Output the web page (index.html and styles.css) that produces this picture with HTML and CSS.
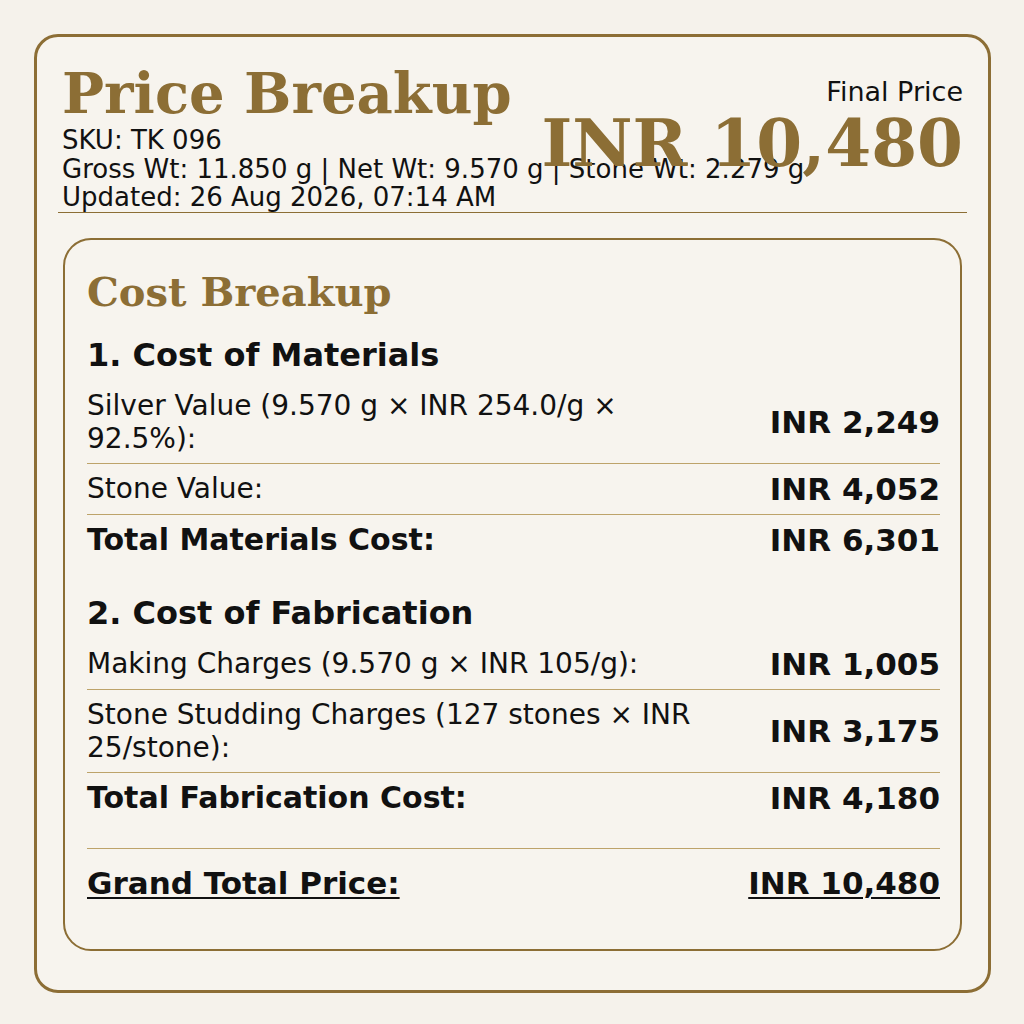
FILE: index.html
```html
<!DOCTYPE html>
<html lang="en">
<head>
<meta charset="utf-8">
<title>Price Breakup</title>
<link rel="stylesheet" href="styles.css">
</head>
<body>
<div class="card">
  <header class="head">
    <div class="head-left">
      <h1 class="title">Price Breakup</h1>
      <div class="info">SKU: TK 096</div>
      <div class="info">Gross Wt: 11.850 g | Net Wt: 9.570 g | Stone Wt: 2.279 g</div>
      <div class="info">Updated: 26 Aug 2026, 07:14 AM</div>
    </div>
    <div class="head-right">
      <div class="final-label">Final Price</div>
      <div class="final-value">INR 10,480</div>
    </div>
  </header>

  <section class="box">
    <h2 class="box-title">Cost Breakup</h2>

    <div class="group">
      <h3 class="group-title">1. Cost of Materials</h3>
      <div class="row">
        <span class="label">Silver Value (9.570 g × INR 254.0/g × 92.5%):</span>
        <span class="value">INR 2,249</span>
      </div>
      <div class="row">
        <span class="label">Stone Value:</span>
        <span class="value">INR 4,052</span>
      </div>
      <div class="row total">
        <span class="label">Total Materials Cost:</span>
        <span class="value">INR 6,301</span>
      </div>
    </div>

    <div class="group">
      <h3 class="group-title">2. Cost of Fabrication</h3>
      <div class="row">
        <span class="label">Making Charges (9.570 g × INR 105/g):</span>
        <span class="value">INR 1,005</span>
      </div>
      <div class="row">
        <span class="label">Stone Studding Charges (127 stones × INR 25/stone):</span>
        <span class="value">INR 3,175</span>
      </div>
      <div class="row total">
        <span class="label">Total Fabrication Cost:</span>
        <span class="value">INR 4,180</span>
      </div>
    </div>

    <div class="grand">
      <span class="grand-label">Grand Total Price:</span>
      <span class="grand-value">INR 10,480</span>
    </div>
  </section>
</div>
</body>
</html>
```

FILE: styles.css
```css
html, body {
  margin: 0;
  padding: 0;
  background: #f5f2eb;
}

body {
  font-family: "DejaVu Sans", "Liberation Sans", sans-serif;
  color: #111111;
  padding: 34px 33px 33px 34px;
}

.card {
  background: #f7f4ee;
  border: 3px solid #8c6e35;
  border-radius: 24px;
  padding: 23px 25px 39px 25px;
}

.head {
  display: flex;
  justify-content: space-between;
  border-bottom: 1px solid #8c6e35;
  margin: 0 -4px;
  padding: 0 4px 0 4px;
}

.head-left {
  flex: 1 1 auto;
  min-width: 0;
  white-space: nowrap;
}

.title {
  margin: 0;
  font-family: "DejaVu Serif", "Liberation Serif", serif;
  font-weight: bold;
  font-size: 56px;
  line-height: normal;
  color: #8c6e35;
}

.info {
  font-size: 26px;
  line-height: 1.1;
}

.head-right {
  flex: none;
  display: flex;
  flex-direction: column;
  align-items: flex-end;
  margin-top: 17px;
}

.final-label {
  font-size: 27px;
  line-height: 1.1;
}

.final-value {
  margin-top: 3px;
  font-family: "DejaVu Serif", "Liberation Serif", serif;
  font-weight: bold;
  font-size: 66px;
  line-height: 1;
  color: #8c6e35;
}

.box {
  margin: 25px 1px 0 1px;
  border: 2px solid #8c6e35;
  border-radius: 28px;
  padding: 28px 20px 28px 22px;
}

.box-title {
  margin: 0;
  font-family: "DejaVu Serif", "Liberation Serif", serif;
  font-weight: bold;
  font-size: 40px;
  line-height: normal;
  color: #8c6e35;
}

.group {
  margin-top: 21px;
}

.group + .group {
  margin-top: 29px;
}

.group-title {
  margin: 0 0 7px 0;
  font-size: 32px;
  font-weight: bold;
  line-height: normal;
}

.row {
  display: flex;
  justify-content: space-between;
  align-items: center;
  gap: 40px;
  padding: 8px 0;
  border-bottom: 1px solid #bda36a;
}

.row.total {
  border-bottom: none;
}

.label {
  font-size: 28px;
  line-height: normal;
  max-width: 620px;
}

.value {
  flex: none;
  font-size: 31px;
  font-weight: bold;
  line-height: 34px;
}

.row.total .label {
  font-size: 30px;
  font-weight: bold;
  line-height: 34px;
}

.grand {
  display: flex;
  justify-content: space-between;
  align-items: center;
  margin-top: 25px;
  border-top: 1px solid #bda36a;
  padding: 16px 0 20px 0;
  font-size: 31px;
  font-weight: bold;
  line-height: normal;
}

.grand-label,
.grand-value {
  text-decoration: underline;
  text-decoration-thickness: 2px;
  text-underline-offset: 3px;
}
```
